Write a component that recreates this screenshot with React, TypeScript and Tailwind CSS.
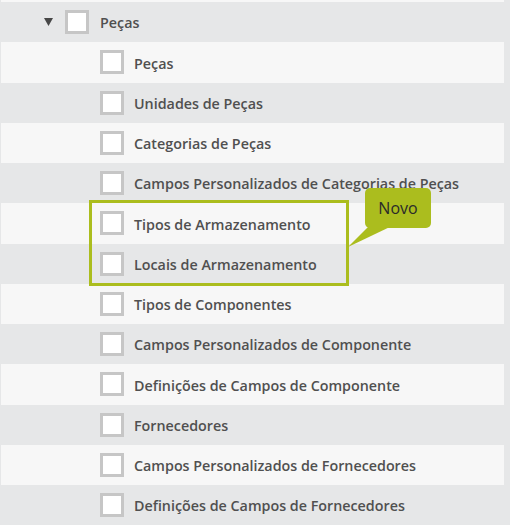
const items = [
  "Peças",
  "Unidades de Peças",
  "Categorias de Peças",
  "Campos Personalizados de Categorias de Peças",
  "Tipos de Armazenamento",
  "Locais de Armazenamento",
  "Tipos de Componentes",
  "Campos Personalizados de Componente",
  "Definições de Campos de Componente",
  "Fornecedores",
  "Campos Personalizados de Fornecedores",
  "Definições de Campos de Fornecedores",
];

function Checkbox() {
  return <div className="w-6 h-6 shrink-0 border-[3px] border-[#c6c6c6] bg-white" />;
}

function Row({ label, light }: { label: string; light: boolean }) {
  return (
    <div
      className={
        light
          ? "h-[40.25px] flex items-center ml-px mr-[6px] bg-[#f7f7f7] pl-[99px]"
          : "h-[40.25px] flex items-center bg-[#e6e7e8] pl-[100px]"
      }
    >
      <Checkbox />
      <span className="ml-[10px] pt-[2px] text-[14.3px] font-semibold text-[#505050] whitespace-nowrap">{label}</span>
    </div>
  );
}

export default function App() {
  return (
    <div
      className="relative w-[510px] h-[525px] overflow-hidden bg-[#e6e7e8]"
      style={{ fontFamily: '"Open Sans", "Liberation Sans", sans-serif' }}
    >
      <div className="h-[2px] ml-px mr-[6px] bg-[#f7f7f7]" />

      {/* parent node */}
      <div className="h-[40.25px] flex items-center bg-[#e6e7e8]">
        <svg className="ml-[44px] w-[9px] h-[8px]" viewBox="0 0 9 8">
          <path d="M0 0H9L4.5 8Z" fill="#474747" />
        </svg>
        <div className="ml-[12px]">
          <Checkbox />
        </div>
        <span className="ml-[11px] pt-[2px] text-[14.3px] font-semibold text-[#505050]">Peças</span>
      </div>

      {items.map((label, i) => (
        <Row key={label} label={label} light={i % 2 === 0} />
      ))}

      {/* highlight around the new entries */}
      <div className="absolute left-[89px] top-[200px] w-[260px] h-[86px] border-[3px] border-[#abbd1e]" />

      {/* "Novo" callout */}
      <svg className="absolute left-[345px] top-[225px] w-[55px] h-[25px]" viewBox="0 0 55 25">
        <path d="M25 0H49L3 22Z" fill="#abbd1e" />
      </svg>
      <div className="absolute left-[365px] top-[188px] w-[66px] h-[40px] rounded-[5px] bg-[#abbd1e] flex items-center justify-center text-[16px] text-[#2a2a2a]">
        Novo
      </div>
    </div>
  );
}
